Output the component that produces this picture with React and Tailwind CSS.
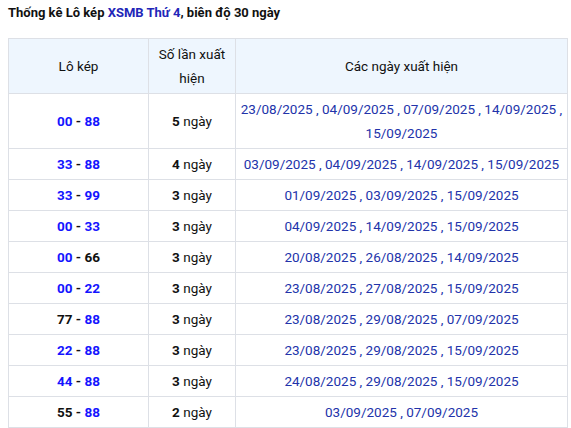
import React from "react";

const rows = [
  { a: "00", b: "88", aBlue: true, n: 5, days: "23/08/2025 , 04/09/2025 , 07/09/2025 , 14/09/2025 , 15/09/2025" },
  { a: "33", b: "88", aBlue: true, n: 4, days: "03/09/2025 , 04/09/2025 , 14/09/2025 , 15/09/2025" },
  { a: "33", b: "99", aBlue: true, n: 3, days: "01/09/2025 , 03/09/2025 , 15/09/2025" },
  { a: "00", b: "33", aBlue: true, n: 3, days: "04/09/2025 , 14/09/2025 , 15/09/2025" },
  { a: "00", b: "66", aBlue: true, n: 3, days: "20/08/2025 , 26/08/2025 , 14/09/2025", bBlack: true },
  { a: "00", b: "22", aBlue: true, n: 3, days: "23/08/2025 , 27/08/2025 , 15/09/2025" },
  { a: "77", b: "88", aBlue: false, n: 3, days: "23/08/2025 , 29/08/2025 , 07/09/2025" },
  { a: "22", b: "88", aBlue: true, n: 3, days: "23/08/2025 , 29/08/2025 , 15/09/2025" },
  { a: "44", b: "88", aBlue: true, n: 3, days: "24/08/2025 , 29/08/2025 , 15/09/2025" },
  { a: "55", b: "88", aBlue: false, n: 2, days: "03/09/2025 , 07/09/2025" },
];

export default function App() {
  return (
    <div className="bg-white px-2 pt-[3px] font-['Roboto',sans-serif] text-[13.5px] text-[#111]">
      <h2 className="text-[13px] leading-5 font-bold text-[#111]">
        Thống kê Lô kép <span className="text-[#2226b8]">XSMB Thứ 4</span>, biên độ 30 ngày
      </h2>
      <table className="mt-[15px] w-[560px] border-collapse text-center leading-6">
        <thead>
          <tr className="bg-[#eef6fe]">
            <th className="w-[140px] border border-[#dde0e6] px-1 py-[3px] font-normal">Lô kép</th>
            <th className="w-[87px] border border-[#dde0e6] px-2 py-[3px] font-normal">Số lần xuất hiện</th>
            <th className="border border-[#dde0e6] px-1 py-[3px] font-normal">Các ngày xuất hiện</th>
          </tr>
        </thead>
        <tbody>
          {rows.map((r, i) => (
            <tr key={i}>
              <td className="border border-[#dde0e6] px-1 py-[3px] font-bold">
                <span className={r.aBlue ? "text-[#1414ff]" : "text-[#111]"}>{r.a}</span>
                <span> - </span>
                <span className={r.bBlack ? "text-[#111]" : "text-[#1414ff]"}>{r.b}</span>
              </td>
              <td className="border border-[#dde0e6] px-1 py-[3px]">
                <b>{r.n}</b> ngày
              </td>
              <td className="border border-[#dde0e6] px-1 py-[3px] text-[#2233aa]">{r.days}</td>
            </tr>
          ))}
        </tbody>
      </table>
    </div>
  );
}
